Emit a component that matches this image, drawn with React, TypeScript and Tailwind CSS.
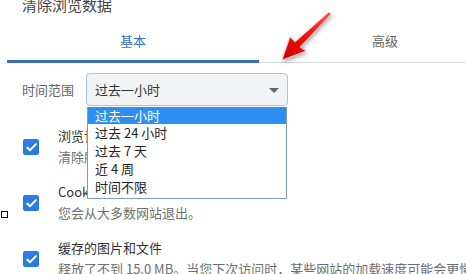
import { Check } from "lucide-react";

const font = { fontFamily: '"Noto Sans CJK SC", "Noto Sans", sans-serif' };

const ranges = ["过去一小时", "过去 24 小时", "过去 7 天", "近 4 周", "时间不限"];

const items = [
  { title: "浏览记录", desc: "清除所有已同步设备中的记录" },
  { title: "Cookie 及其他网站数据", desc: "您会从大多数网站退出。" },
  {
    title: "缓存的图片和文件",
    desc: "释放了不到 15.0 MB。当您下次访问时，某些网站的加载速度可能会更慢。",
  },
];

function CheckRow({ title, desc }: { title: string; desc: string }) {
  return (
    <div className="flex items-center h-[56px] pl-[23px]">
      <div className="w-[16px] h-[16px] rounded-[2px] bg-[#2a7be4] flex items-center justify-center shrink-0">
        <Check className="w-[13px] h-[13px] text-white" strokeWidth={3.5} />
      </div>
      <div className="ml-[19px] whitespace-nowrap text-[13px]">
        <div className="text-[#333] leading-[19px]">{title}</div>
        <div className="text-[#6b6f73] leading-[23px]">{desc}</div>
      </div>
    </div>
  );
}

export default function App() {
  return (
    <div className="relative w-[466px] h-[274px] overflow-hidden bg-white" style={font}>
      <div className="pl-[22px] -mt-[6px] h-[28px] leading-[22px] text-[15px] text-[#444]">清除浏览数据</div>

      {/* tabs */}
      <div className="ml-[7px] w-[504px] flex border-b border-[#d6d9dc]">
        <div className="w-[252px] h-[40px] flex flex-col">
          <div className="flex-1 flex items-center justify-center text-[13px] text-[#2f6fc9]">基本</div>
          <div className="h-[3px] bg-[#3a6fb8] -mb-[1px]" />
        </div>
        <div className="w-[252px] h-[40px] flex items-center justify-center text-[13px] text-[#666] pb-[2px]">高级</div>
      </div>

      {/* time range */}
      <div className="flex items-center mt-[10px] pl-[22px] h-[33px]">
        <div className="w-[64px] text-[13px] text-[#5f6368]">时间范围</div>
        <div className="relative w-[202px] h-[33px] rounded-[4px] border border-[#a9c4ec] bg-[#f1f3f4] flex items-center pl-[8px] text-[13px] text-[#333]">
          过去一小时
          <div className="absolute right-[8px] top-[14px] w-0 h-0 border-l-[5px] border-r-[5px] border-t-[5px] border-l-transparent border-r-transparent border-t-[#5f6368]" />
        </div>
      </div>

      <div className="mt-[13px]">
        {items.map((it) => (
          <CheckRow key={it.title} {...it} />
        ))}
      </div>

      {/* open dropdown list */}
      <div className="absolute left-[87px] top-[107px] w-[200px] border border-[#7f9db9] border-t-0 bg-white text-[13px]">
        {ranges.map((r, i) => (
          <div
            key={r}
            className={
              i === 0
                ? "h-[17px] leading-[17px] pl-[7px] bg-[#2f8ff0] text-white"
                : "h-[18px] leading-[18px] pl-[7px] text-[#222]"
            }
          >
            {r}
          </div>
        ))}
        <div className="h-[2px]" />
      </div>

      {/* stray marker */}
      <div className="absolute left-[1px] top-[211px] w-[7px] h-[7px] border border-black bg-white" />

      {/* annotation arrow */}
      <svg className="absolute left-0 top-0 drop-shadow-[1px_2px_2px_rgba(0,0,0,0.35)]" width="466" height="80">
        <defs>
          <linearGradient id="ar" x1="0" y1="1" x2="1" y2="0">
            <stop offset="0" stopColor="#c80000" />
            <stop offset="0.5" stopColor="#f01010" />
            <stop offset="1" stopColor="#ff5050" />
          </linearGradient>
        </defs>
        <polygon
          points="282,60 290,37 295,42 329,12 331,14 300,47 306,51"
          fill="url(#ar)"
          stroke="#ffd0d0"
          strokeWidth="0.8"
          strokeLinejoin="round"
        />
      </svg>
    </div>
  );
}
